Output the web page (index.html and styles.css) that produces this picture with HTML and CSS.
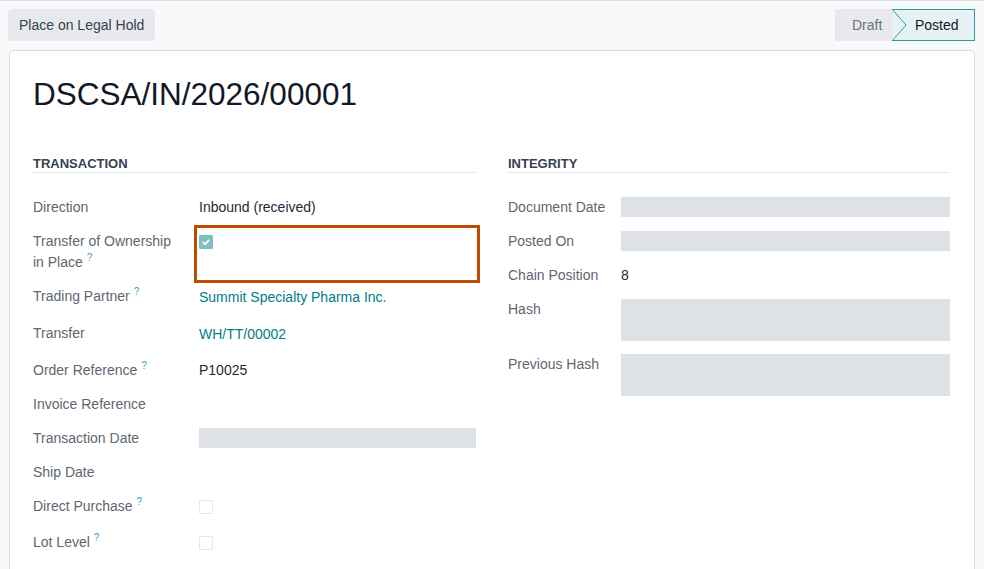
FILE: index.html
```html
<!DOCTYPE html>
<html>
<head>
<meta charset="utf-8">
<link rel="stylesheet" href="styles.css">
</head>
<body>
<div class="page">
  <div class="control-panel">
    <button class="btn">Place on Legal Hold</button>
    <div class="statusbar">
      <span class="stage">Draft</span>
      <span class="stage current">
        <svg class="chev" width="16" height="32" viewBox="0 0 16 32"><polyline points="0,0 14,16 0,32" fill="none" stroke="#2a9ba0" stroke-width="1"/></svg>
        Posted
      </span>
    </div>
  </div>
  <div class="sheet">
    <h1 class="title">DSCSA/IN/2026/00001</h1>
    <div class="groups">
      <div class="group">
        <div class="sep">TRANSACTION</div>
        <div class="row">
          <div class="lbl">Direction</div>
          <div class="val">Inbound (received)</div>
        </div>
        <div class="row row-tall">
          <div class="lbl">Transfer of Ownership<br>in Place <sup>?</sup></div>
          <div class="val val-hl"><span class="cb checked"><svg width="14" height="14" viewBox="0 0 14 14"><polyline points="3.8,7.2 6,9.2 10.2,4.8" fill="none" stroke="#fff" stroke-width="1.8"/></svg></span></div>
        </div>
        <div class="row row-link">
          <div class="lbl">Trading Partner <sup>?</sup></div>
          <div class="val link">Summit Specialty Pharma Inc.</div>
        </div>
        <div class="row row-link">
          <div class="lbl">Transfer</div>
          <div class="val link">WH/TT/00002</div>
        </div>
        <div class="row">
          <div class="lbl">Order Reference <sup>?</sup></div>
          <div class="val">P10025</div>
        </div>
        <div class="row">
          <div class="lbl">Invoice Reference</div>
          <div class="val"></div>
        </div>
        <div class="row">
          <div class="lbl">Transaction Date</div>
          <div class="val"><div class="bar"></div></div>
        </div>
        <div class="row">
          <div class="lbl">Ship Date</div>
          <div class="val"></div>
        </div>
        <div class="row row-cb">
          <div class="lbl">Direct Purchase <sup>?</sup></div>
          <div class="val"><span class="cb"></span></div>
        </div>
        <div class="row row-cb">
          <div class="lbl">Lot Level <sup>?</sup></div>
          <div class="val"><span class="cb"></span></div>
        </div>
      </div>
      <div class="group group-right">
        <div class="sep">INTEGRITY</div>
        <div class="row">
          <div class="lbl">Document Date</div>
          <div class="val"><div class="bar"></div></div>
        </div>
        <div class="row">
          <div class="lbl">Posted On</div>
          <div class="val"><div class="bar"></div></div>
        </div>
        <div class="row">
          <div class="lbl">Chain Position</div>
          <div class="val">8</div>
        </div>
        <div class="row">
          <div class="lbl">Hash</div>
          <div class="val"><div class="bar bar-big"></div></div>
        </div>
        <div class="row">
          <div class="lbl">Previous Hash</div>
          <div class="val"><div class="bar bar-big"></div></div>
        </div>
      </div>
    </div>
  </div>
</div>
</body>
</html>
```

FILE: styles.css
```css
* { box-sizing: border-box; }
html, body {
  margin: 0;
  padding: 0;
  background: #f8f9fa;
  font-family: "Liberation Sans", Arial, sans-serif;
  font-size: 14px;
  color: #212529;
  overflow: hidden;
}
.page {
  border-top: 1px solid #dee2e6;
  height: 569px;
}
.control-panel {
  display: flex;
  justify-content: space-between;
  align-items: flex-start;
  padding: 8px 9px 0 8px;
}
.btn {
  height: 32px;
  padding: 0 11px;
  border: none;
  border-radius: 4px;
  background: #e7e9ed;
  color: #374151;
  font-family: inherit;
  font-size: 14px;
}
.statusbar {
  display: flex;
  height: 32px;
}
.stage {
  display: flex;
  align-items: center;
  height: 32px;
  background: #e7e9ed;
  color: #6b7280;
  padding: 0 10px 0 17px;
  width: 57px;
}
.stage.current {
  position: relative;
  width: 83px;
  background: #e6f2f3;
  color: #111827;
  border: 1px solid #2a9ba0;
  border-left: none;
  padding: 0 0 0 23px;
}
.chev {
  position: absolute;
  left: 0;
  top: -1px;
}
.sheet {
  margin: 9px 9px 0 9px;
  background: #fff;
  border: 1px solid #d8dadd;
  border-radius: 4px;
  padding: 0 24px 0 23px;
  height: 540px;
}
.title {
  margin: 0;
  padding-top: 24px;
  height: 104px;
  font-weight: 400;
  font-size: 31.5px;
  line-height: 38px;
  color: #111827;
}
.groups {
  display: grid;
  grid-template-columns: 443px 442px;
  column-gap: 32px;
}
.sep {
  font-size: 13px;
  font-weight: 700;
  color: #374151;
  line-height: 17px;
  padding-bottom: 0;
  border-bottom: 1px solid #e5e7eb;
  margin-bottom: 24px;
}
.row {
  display: grid;
  grid-template-columns: 166px 1fr;
  padding-bottom: 13px;
  line-height: 21px;
}
.group-right .row { grid-template-columns: 113px 1fr; }
.row-link { padding-bottom: 15px; }
.row-cb { padding-bottom: 15px; }
.lbl {
  color: #5f6670;
}
.lbl sup {
  color: #3aa0c6;
  font-size: 10px;
  vertical-align: top;
  position: relative;
  top: -5px;
  margin-left: 0;
}
.val { color: #1f2937; min-height: 21px; }
.row-link .val { padding-top: 1px; }
.link { color: #017e84; }
.val-hl { position: relative; height: 42px; }
.val-hl::after {
  content: "";
  position: absolute;
  left: -5px;
  right: -4px;
  top: -6px;
  bottom: -10px;
  border: 3px solid #c04b00;
}
.bar {
  height: 20px;
  background: #dee1e5;
}
.bar-big { height: 42px; }
.cb {
  display: block;
  width: 14px;
  height: 14px;
  margin-top: 4px;
  border: 1px solid #e5e7eb;
  border-radius: 1px;
}
.cb.checked {
  background: #7fbfc1;
  border-color: #7fbfc1;
}
.cb.checked svg { display: block; margin: -1px; }
```
